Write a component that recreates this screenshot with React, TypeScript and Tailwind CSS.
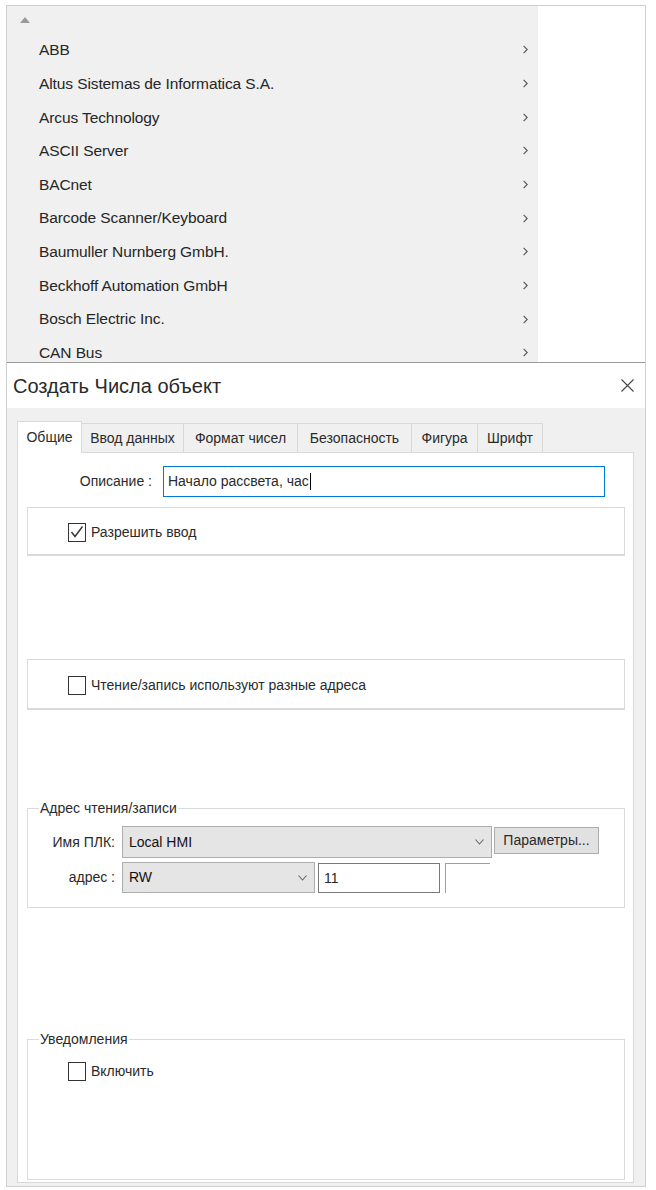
import React from "react";

const vendors = [
  "ABB",
  "Altus Sistemas de Informatica S.A.",
  "Arcus Technology",
  "ASCII Server",
  "BACnet",
  "Barcode Scanner/Keyboard",
  "Baumuller Nurnberg GmbH.",
  "Beckhoff Automation GmbH",
  "Bosch Electric Inc.",
  "CAN Bus",
];

const tabs = [
  { label: "Ввод данных", w: "w-[102px]" },
  { label: "Формат чисел", w: "w-[114px]" },
  { label: "Безопасность", w: "w-[114px]" },
  { label: "Фигура", w: "w-[66px]" },
  { label: "Шрифт", w: "w-[65px]" },
];

const Checkbox = ({ checked = false }: { checked?: boolean }) => (
  <span className="flex w-[18px] h-[19px] shrink-0 items-center justify-center border border-[#333] bg-white">
    {checked && (
      <svg width="14" height="14" viewBox="0 0 14 14">
        <polyline points="1.5,7 5,11.5 12.5,1.5" fill="none" stroke="#333" strokeWidth="1.4" />
      </svg>
    )}
  </span>
);

const Chevron = () => (
  <svg width="9" height="6" viewBox="0 0 9 6">
    <polyline points="0.5,0.5 4.5,5 8.5,0.5" fill="none" stroke="#666" strokeWidth="1.1" />
  </svg>
);

export default function App() {
  return (
    <div className="w-[656px] h-[1190px] bg-white pt-[5px] pl-[6px] font-['Liberation_Sans',Arial,sans-serif] text-[#262626]">
      <div className="flex flex-col w-[640px] h-[1182px] border border-[#cfcfcf] overflow-hidden">
        {/* vendor menu */}
        <div className="flex h-[356px] shrink-0">
          <div className="flex flex-col w-[531px] bg-[#f0f0f0] overflow-hidden">
            <div className="h-[27px] shrink-0 pl-[13px] pt-[11px]">
              <svg width="10" height="6" viewBox="0 0 10 6">
                <polygon points="0,6 5,0 10,6" fill="#9a9a9a" />
              </svg>
            </div>
            {vendors.map((v) => (
              <div key={v} className="flex h-[33.67px] shrink-0 items-center justify-between pl-[32px] pr-[10px] text-[15.5px] tracking-[-0.1px]">
                <span>{v}</span>
                <svg width="5" height="9" viewBox="0 0 5 9">
                  <polyline points="0.6,0.8 4.2,4.5 0.6,8.2" fill="none" stroke="#555" strokeWidth="1.1" />
                </svg>
              </div>
            ))}
          </div>
          <div className="flex-1 bg-white" />
        </div>

        {/* dialog */}
        <div className="flex flex-col flex-1 border-t border-[#9a9a9a]">
          <div className="flex h-[45px] shrink-0 items-center justify-between bg-white pl-[6px] pr-[11px]">
            <span className="text-[20px] text-[#2a2a2a]">Создать Числа объект</span>
            <svg width="13" height="13" viewBox="0 0 13 13">
              <path d="M0.5 0.5 L12.5 12.5 M12.5 0.5 L0.5 12.5" stroke="#444" strokeWidth="1.1" />
            </svg>
          </div>

          <div className="flex-1 bg-[#f0f0f0] pt-[13px] pl-[10px] pr-[11px] pb-[3px] text-[14px] text-[#2a2a2a]">
            {/* tabs */}
            <div className="flex h-[31px] items-end">
              <div className="relative z-10 -mb-px flex h-[32px] w-[65px] items-center justify-center border border-b-0 border-[#d9d9d9] bg-white">
                Общие
              </div>
              {tabs.map((t) => (
                <div key={t.label} className={`flex h-[29px] ${t.w} items-center justify-center border-t border-r border-[#d9d9d9] bg-[#f0f0f0]`}>
                  {t.label}
                </div>
              ))}
            </div>

            {/* tab panel */}
            <div className="flex flex-col h-[731px] w-[617px] border border-[#d9d9d9] bg-white overflow-hidden">
              <div className="flex items-center mt-[13px]">
                <span className="w-[134px] text-right">Описание :</span>
                <div className="ml-[11px] flex h-[31px] w-[442px] items-center border border-[#0078d7] pl-[4px]">
                  <span>Начало рассвета, час</span>
                  <span className="ml-px h-[17px] w-px bg-black" />
                </div>
              </div>

              <div className="ml-[9px] mt-[10px] flex h-[49px] w-[598px] items-center border border-b-2 border-[#dadada] pl-[40px] pt-[2px]">
                <Checkbox checked />
                <span className="ml-[5px]">Разрешить ввод</span>
              </div>

              <div className="ml-[9px] mt-[103px] flex h-[51px] w-[598px] items-center border border-b-2 border-[#dadada] pl-[40px] pt-[3px]">
                <Checkbox />
                <span className="ml-[5px]">Чтение/запись используют разные адреса</span>
              </div>

              <fieldset className="ml-[9px] mt-[90px] w-[598px] border border-[#dadada] pb-[14px]">
                <legend className="ml-[11px] px-px leading-[16px]">Адрес чтения/записи</legend>
                <div className="mt-[10px] flex h-[32px] items-start">
                  <span className="flex h-[32px] w-[87px] items-center justify-end">Имя ПЛК:</span>
                  <div className="ml-[7px] flex h-[32px] w-[370px] items-center justify-between border border-[#adadad] bg-[#e5e5e5] pl-[6px] pr-[7px] text-[#111]">
                    <span>Local HMI</span>
                    <Chevron />
                  </div>
                  <div className="ml-[2px] mt-px flex h-[27px] w-[105px] items-center justify-center border border-[#adadad] bg-[#e1e1e1]">
                    Параметры...
                  </div>
                </div>
                <div className="mt-[4px] flex h-[31px] items-start">
                  <span className="flex h-[31px] w-[87px] items-center justify-end">адрес :</span>
                  <div className="ml-[7px] flex h-[31px] w-[193px] items-center justify-between border border-[#adadad] bg-[#e5e5e5] pl-[6px] pr-[7px] text-[#111]">
                    <span>RW</span>
                    <Chevron />
                  </div>
                  <div className="ml-[3px] mt-px flex h-[30px] w-[122px] items-center border border-[#7a7a7a] bg-white pl-[5px]">
                    11
                  </div>
                  <div className="ml-[5px] mt-px h-[30px] w-[45px] border-l border-t border-[#a0a0a0]" />
                </div>
              </fieldset>

              <fieldset className="ml-[9px] mt-[123px] h-[149px] w-[598px] border border-[#dadada]">
                <legend className="ml-[11px] px-px leading-[16px]">Уведомления</legend>
                <div className="mt-[14px] flex items-center pl-[40px]">
                  <Checkbox />
                  <span className="ml-[5px]">Включить</span>
                </div>
              </fieldset>
            </div>
          </div>
        </div>
      </div>
    </div>
  );
}
